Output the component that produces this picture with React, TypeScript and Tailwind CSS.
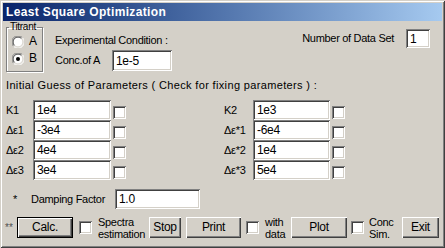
import React from "react";

const sunken =
  "bg-white shadow-[inset_1px_1px_0_#808080,inset_-1px_-1px_0_#ffffff,inset_2px_2px_0_#404040,inset_-2px_-2px_0_#d4d0c8]";
const raised =
  "bg-[#d4d0c8] shadow-[inset_1px_1px_0_#ffffff,inset_-1px_-1px_0_#404040,inset_-2px_-2px_0_#808080]";

function Field({ value, className }: { value: string; className: string }) {
  return (
    <div className={`${sunken} ${className} shrink-0 flex items-center pl-[4px] text-[12px] leading-none`}>
      {value}
    </div>
  );
}

function Check({ className = "" }: { className?: string }) {
  return <div className={`${sunken} w-[13px] h-[13px] shrink-0 ${className}`} />;
}

function Radio({ on }: { on?: boolean }) {
  return (
    <svg width="12" height="12" viewBox="0 0 12 12" className="shrink-0">
      <circle cx="6" cy="6" r="5.5" fill="#ffffff" />
      <path d="M1.6 10.4 A5.5 5.5 0 0 1 10.4 1.6" fill="none" stroke="#808080" strokeWidth="1" />
      <path d="M10.4 1.6 A5.5 5.5 0 0 1 1.6 10.4" fill="none" stroke="#ffffff" strokeWidth="1" />
      <path d="M2.5 9.5 A4.5 4.5 0 0 1 9.5 2.5" fill="none" stroke="#404040" strokeWidth="1" />
      <path d="M9.5 2.5 A4.5 4.5 0 0 1 2.5 9.5" fill="none" stroke="#d4d0c8" strokeWidth="1" />
      {on && <circle cx="6" cy="6" r="2" fill="#000000" />}
    </svg>
  );
}

function Btn({ label, className, def }: { label: string; className: string; def?: boolean }) {
  return (
    <div
      className={`${className} h-[21px] shrink-0 flex items-center justify-center text-[12px] ${
        def ? "border border-black" : ""
      }`}
    >
      <div className={`${raised} w-full h-full flex items-center justify-center`}>{label}</div>
    </div>
  );
}

const leftRows = [
  { label: "K1", value: "1e4" },
  { label: "Δε1", value: "-3e4" },
  { label: "Δε2", value: "4e4" },
  { label: "Δε3", value: "3e4" },
];

const rightRows = [
  { label: "K2", value: "1e3" },
  { label: "Δε*1", value: "-6e4" },
  { label: "Δε*2", value: "1e4" },
  { label: "Δε*3", value: "5e4" },
];

export default function App() {
  return (
    <div
      className="
        w-[445px] h-[248px]
        bg-[#d4d0c8]
        p-[3px]
        flex flex-col
        text-black text-[11px] leading-[13px] tracking-[-0.3px] whitespace-nowrap
        font-['Liberation_Sans',Arial,sans-serif]
        shadow-[inset_1px_1px_0_#d4d0c8,inset_-1px_-1px_0_#404040,inset_2px_2px_0_#ffffff,inset_-2px_-2px_0_#808080]
      "
    >
      {/* TITLE BAR */}
      <div className="h-[18px] shrink-0 flex items-center pl-[3px] bg-gradient-to-r from-[#0a246a] to-[#a6caf0] text-white font-bold text-[12px] tracking-[0.35px]">
        Least Square Optimization
      </div>

      {/* TOP ROW */}
      <div className="flex h-[51px] shrink-0">
        {/* TITRANT */}
        <fieldset className="ml-[3px] mt-[1px] w-[37px] h-[50px] border border-[#808080] shadow-[1px_1px_0_#ffffff,inset_1px_1px_0_#ffffff] pl-[5px] pt-[1px]">
          <legend className="text-[10px] leading-[10px] px-px -ml-[3px]">Titrant</legend>
          <div className="flex items-center gap-[5px] h-[17px] text-[12px]">
            <Radio /> A
          </div>
          <div className="flex items-center gap-[5px] h-[17px] text-[12px]">
            <Radio on /> B
          </div>
        </fieldset>

        {/* EXPERIMENTAL CONDITION */}
        <div className="ml-[12px] flex flex-col">
          <p className="mt-[13px]">Experimental Condition :</p>
          <div className="mt-[3px] flex items-center">
            <span className="w-[57px]">Conc.of A</span>
            <Field value="1e-5" className="w-[60px] h-[21px]" />
          </div>
        </div>

        {/* DATA SET */}
        <div className="ml-auto mr-[12px] mt-[8px] flex items-start gap-[12px]">
          <span className="leading-[19px]">Number of Data Set</span>
          <Field value="1" className="w-[24px] h-[19px]" />
        </div>
      </div>

      {/* PARAMETERS */}
      <p className="mt-[7px] pl-[3px] tracking-[0.35px]">
        Initial Guess of Parameters ( Check for fixing parameters ) :
      </p>

      <div className="mt-[8px] flex flex-col">
        {leftRows.map((row, i) => (
          <div key={i} className="flex h-[20px]">
            <div className="w-[221px] pl-[3px] flex items-center">
              <span className="w-[27px]">{row.label}</span>
              <Field value={row.value} className="w-[78px] h-[20px]" />
              <Check className="ml-[2px] self-end mb-px" />
            </div>
            <div className="flex items-center">
              <span className="w-[29px]">{rightRows[i].label}</span>
              <Field value={rightRows[i].value} className="w-[77px] h-[20px]" />
              <Check className="ml-[2px] self-end mb-px" />
            </div>
          </div>
        ))}
      </div>

      {/* DAMPING */}
      <div className="mt-[9px] flex items-center h-[20px]">
        <span className="ml-[10px] w-[18px]">*</span>
        <span className="w-[84px]">Damping Factor</span>
        <Field value="1.0" className="w-[85px] h-[20px]" />
      </div>

      {/* BUTTONS */}
      <div className="mt-[8px] flex items-center h-[21px]">
        <span className="ml-[2px] w-[12px] text-[10px] text-[#505050] tracking-[0px]">**</span>
        <Btn label="Calc." className="w-[56px]" def />
        <Check className="ml-[6px]" />
        <span className="ml-[6px] w-[51px] leading-[12px]">
          Spectra
          <br />
          estimation
        </span>
        <Btn label="Stop" className="w-[32px]" />
        <Btn label="Print" className="ml-[5px] w-[55px]" />
        <Check className="ml-[5px]" />
        <span className="ml-[6px] w-[26px] leading-[12px]">
          with
          <br />
          data
        </span>
        <Btn label="Plot" className="w-[56px]" />
        <Check className="ml-[4px]" />
        <span className="ml-[5px] w-[33px] leading-[12px]">
          Conc
          <br />
          Sim.
        </span>
        <Btn label="Exit" className="w-[37px]" />
      </div>
    </div>
  );
}
